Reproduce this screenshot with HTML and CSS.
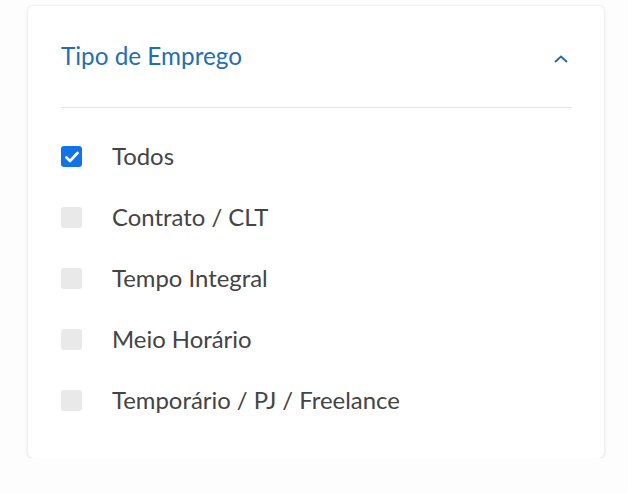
FILE: index.html
```html
<!DOCTYPE html>
<html lang="pt-BR">
<head>
<meta charset="utf-8">
<link rel="stylesheet" href="styles.css">
</head>
<body>
<div class="card">
  <div class="header">
    <span class="title">Tipo de Emprego</span>
    <svg class="chev" width="14" height="8" viewBox="0 0 14 8"><path d="M1 7 L7 1.5 L13 7" fill="none" stroke="#2a6aa8" stroke-width="2"/></svg>
  </div>
  <div class="divider"></div>
  <ul class="list">
    <li class="item"><span class="box checked"><svg width="14" height="12" viewBox="0 0 14 12"><path d="M1.5 6.5 L5 10 L12.5 2" fill="none" stroke="#fff" stroke-width="2.6" stroke-linecap="round" stroke-linejoin="round"/></svg></span><span class="label">Todos</span></li>
    <li class="item"><span class="box"></span><span class="label">Contrato / CLT</span></li>
    <li class="item"><span class="box"></span><span class="label">Tempo Integral</span></li>
    <li class="item"><span class="box"></span><span class="label">Meio Horário</span></li>
    <li class="item"><span class="box"></span><span class="label">Temporário / PJ / Freelance</span></li>
  </ul>
</div>
</body>
</html>
```

FILE: styles.css
```css
html, body { margin: 0; padding: 0; background: #fdfdfd; }
body { font-family: Lato, "Noto Sans", sans-serif; padding: 6px 24px 0 28px; }
.card {
  width: 576px;
  height: 452px;
  box-sizing: border-box;
  background: #fff;
  border-radius: 5px;
  box-shadow: 0 1px 4px rgba(0,0,0,0.12), 0 0 1px rgba(0,0,0,0.1);
  padding: 0 32px 0 33px;
}
.header {
  height: 101px;
  display: flex;
  align-items: center;
  justify-content: space-between;
  padding-right: 4px;
}
.title { color: #1f6fb2; font-size: 24.3px; margin-top: -2px; }
.chev { margin-top: 4px; }
.divider { height: 1px; background: #e6e6e6; }
.list { list-style: none; margin: 0; padding: 38px 0 0 0; display: flex; flex-direction: column; gap: 40px; }
.item { display: flex; align-items: center; height: 21px; }
.box {
  width: 21px; height: 21px; border-radius: 3px; background: #e9e9e9;
  display: flex; align-items: center; justify-content: center;
  margin-right: 30px;
}
.box.checked { background: #1273e6; }
.label { font-size: 23.9px; color: #444; margin-top: -2px; }
```
